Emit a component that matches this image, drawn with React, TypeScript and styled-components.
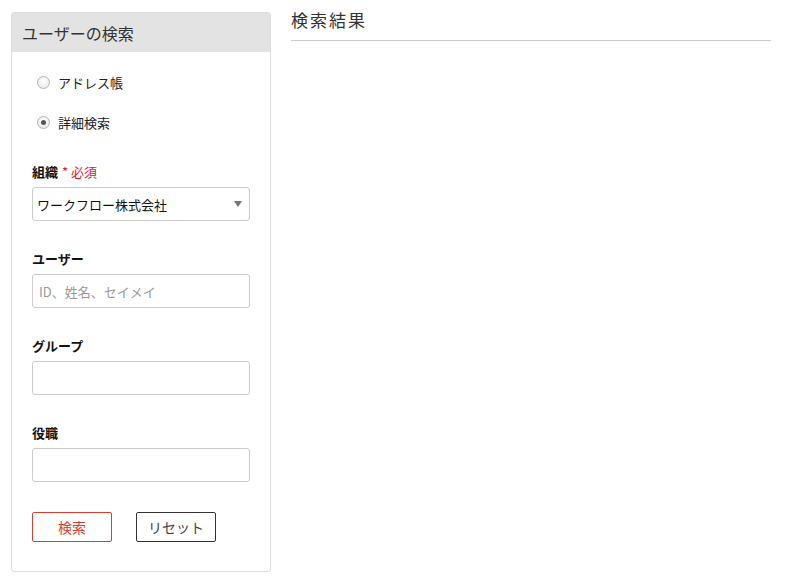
import React from "react";
import styled, { createGlobalStyle } from "styled-components";

const Global = createGlobalStyle`
  html, body { margin: 0; padding: 0; }
  body {
    background: #ffffff;
    min-height: 585px;
    font-family: "Noto Sans CJK JP", "Noto Sans", "Liberation Sans", sans-serif;
    color: #333;
  }
  * { box-sizing: border-box; }
`;

const Page = styled.div`
  display: flex;
  align-items: flex-start;
  gap: 20px;
  padding: 12px 21px 0 11px;
`;

const Panel = styled.section`
  width: 260px;
  flex: none;
  border: 1px solid #dddddd;
  border-radius: 3px;
  background: #fff;
  overflow: hidden;
`;

const PanelHeader = styled.header`
  height: 39px;
  background: #e3e3e3;
  display: flex;
  align-items: center;
  padding: 0 10px;
  font-size: 16px;
  color: #333;
`;

const PanelBody = styled.div`
  padding: 20px 20px 29px 20px;
`;

const RadioList = styled.div`
  display: flex;
  flex-direction: column;
  gap: 20px;
  margin-bottom: 30px;
`;

const RadioRow = styled.label`
  display: flex;
  align-items: center;
  height: 20px;
  padding-left: 5px;
  font-size: 13px;
  color: #222;
`;

const RadioDot = styled.span<{ $checked?: boolean }>`
  width: 13px;
  height: 13px;
  border-radius: 50%;
  border: 1px solid #b5b5b5;
  background: radial-gradient(circle at 50% 35%, #ffffff 0%, #e4e4e4 100%);
  margin-right: 8px;
  display: flex;
  align-items: center;
  justify-content: center;
  &::after {
    content: "";
    width: 5px;
    height: 5px;
    border-radius: 50%;
    background: ${(p) => (p.$checked ? "#555" : "transparent")};
  }
`;

const Field = styled.div`
  display: flex;
  flex-direction: column;
  gap: 5px;
  margin-bottom: 28px;
`;

const Label = styled.div`
  height: 20px;
  line-height: 20px;
  font-size: 13px;
  font-weight: bold;
  color: #111;
`;

const Required = styled.span`
  color: #e8141e;
  font-weight: normal;
  margin-left: 4px;
`;

const Box = styled.div`
  height: 34px;
  border: 1px solid #cccccc;
  border-radius: 3px;
  background: #fff;
  display: flex;
  align-items: center;
  padding: 0 6px 0 4px;
  font-size: 13px;
  color: #111;
`;

const SelectText = styled.span`
  flex: 1;
`;

const Arrow = styled.span`
  width: 0;
  height: 0;
  border-left: 4px solid transparent;
  border-right: 4px solid transparent;
  border-top: 6px solid #777;
  margin-right: 1px;
`;

const TextInput = styled.input`
  height: 34px;
  border: 1px solid #cccccc;
  border-radius: 3px;
  padding: 0 6px;
  font-family: inherit;
  font-size: 13px;
  color: #333;
  outline: none;
  &::placeholder { color: #999; }
`;

const Buttons = styled.div`
  display: flex;
  gap: 24px;
  padding-top: 2px;
`;

const Button = styled.button<{ $variant: "primary" | "default" }>`
  width: 80px;
  height: 30px;
  background: #fff;
  border-radius: 2px;
  font-family: inherit;
  font-size: 14px;
  border: 1px solid ${(p) => (p.$variant === "primary" ? "#e23a2e" : "#333")};
  color: ${(p) => (p.$variant === "primary" ? "#e23a2e" : "#444")};
  padding: 0;
`;

const Results = styled.main`
  flex: 1;
`;

const ResultsTitle = styled.h2`
  margin: 0;
  height: 29px;
  line-height: 16px;
  padding-top: 0;
  font-size: 17px;
  font-weight: normal;
  letter-spacing: 2px;
  color: #333;
  border-bottom: 1px solid #cccccc;
`;

export default function App() {
  return (
    <>
      <Global />
      <Page>
        <Panel>
          <PanelHeader>ユーザーの検索</PanelHeader>
          <PanelBody>
            <RadioList>
              <RadioRow>
                <RadioDot />
                アドレス帳
              </RadioRow>
              <RadioRow>
                <RadioDot $checked />
                詳細検索
              </RadioRow>
            </RadioList>
            <Field>
              <Label>
                組織<Required>* 必須</Required>
              </Label>
              <Box>
                <SelectText>ワークフロー株式会社</SelectText>
                <Arrow />
              </Box>
            </Field>
            <Field>
              <Label>ユーザー</Label>
              <TextInput placeholder="ID、姓名、セイメイ" />
            </Field>
            <Field>
              <Label>グループ</Label>
              <TextInput />
            </Field>
            <Field>
              <Label>役職</Label>
              <TextInput />
            </Field>
            <Buttons>
              <Button $variant="primary">検索</Button>
              <Button $variant="default">リセット</Button>
            </Buttons>
          </PanelBody>
        </Panel>
        <Results>
          <ResultsTitle>検索結果</ResultsTitle>
        </Results>
      </Page>
    </>
  );
}
